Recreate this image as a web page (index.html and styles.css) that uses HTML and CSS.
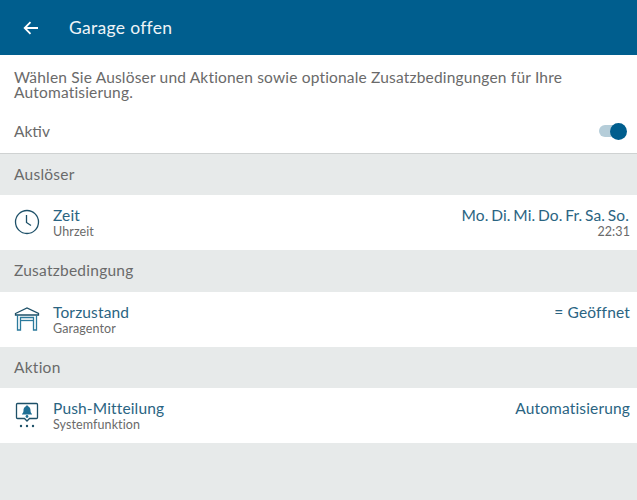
FILE: index.html
```html
<!DOCTYPE html>
<html lang="de">
    <head>
        <meta charset="utf-8">
        <meta name="viewport" content="width=device-width, initial-scale=1.0">
        <title>Garage offen</title>

        <link rel="stylesheet" href="styles.css">
    </head>
    <body>
        <header class="topbar">
            <svg class="back" width="16" height="14" viewBox="0 0 16 14">
                <path d="M15 7H2M7.500 1.200L1.700 7l5.800 5.800" fill="none" stroke="#fff" stroke-width="1.800"/>
            </svg>
            <span class="title">Garage offen</span>
        </header>

        <section class="intro">
            <p class="text">Wählen Sie Auslöser und Aktionen sowie optionale Zusatzbedingungen für Ihre Automatisierung.</p>
            <div class="active">
                <span>Aktiv</span>
                <div class="switch"><div class="knob"></div></div>
            </div>
        </section>

        <h2 class="section">Auslöser</h2>
        <div class="row">
            <svg class="icon" width="26" height="26" viewBox="0 0 26 26">
                <circle cx="13" cy="13" r="11.500" fill="none" stroke="#1d5068" stroke-width="1.300"/>
                <path d="M12.500 6v7.500l4.500 3" fill="none" stroke="#1d5068" stroke-width="1.300"/>
            </svg>
            <div class="labels">
                <div class="name">Zeit</div>
                <div class="sub">Uhrzeit</div>
            </div>
            <div class="values">
                <div class="name days">Mo. Di. Mi. Do. Fr. Sa. So.</div>
                <div class="sub">22:31</div>
            </div>
        </div>

        <h2 class="section">Zusatzbedingung</h2>
        <div class="row">
            <svg class="icon" width="26" height="26" viewBox="0 0 26 26">
                <path d="M1.500 7.500L13 2l11.500 5.500v1.500h-23z" fill="none" stroke="#1d5068" stroke-width="1.300"/>
                <path d="M3.500 9v15h3V11.500h13V24h3V9" fill="none" stroke="#2b7a9c" stroke-width="1.300"/>
                <path d="M6.500 14.500h13" fill="none" stroke="#2b7a9c" stroke-width="1.300"/>
            </svg>
            <div class="labels">
                <div class="name">Torzustand</div>
                <div class="sub">Garagentor</div>
            </div>
            <div class="values">
                <div class="name">= Geöffnet</div>
            </div>
        </div>

        <h2 class="section">Aktion</h2>
        <div class="row">
            <svg class="icon" width="26" height="26" viewBox="0 0 26 26">
                <path d="M3.500 1.500h19a1 1 0 0 1 1 1v13a1 1 0 0 1-1 1h-7l-2.500 2.500-2.500-2.500h-7a1 1 0 0 1-1-1v-13a1 1 0 0 1 1-1z" fill="none" stroke="#1d5068" stroke-width="1.300"/>
                <path d="M13 3.500c1 0 1.500.7 1.500 1.300 1.500.6 2 2 2 3.500 0 2 .5 3 1.500 3.700v.5H8v-.5c1-.7 1.500-1.700 1.500-3.700 0-1.500.5-2.900 2-3.500 0-.6.5-1.300 1.500-1.300z" fill="#1f6f94"/>
                <circle cx="13" cy="14.500" r="1.400" fill="#1f6f94"/>
                <circle cx="7" cy="24" r="1.200" fill="#1d5068"/>
                <circle cx="13" cy="24" r="1.200" fill="#1d5068"/>
                <circle cx="19" cy="24" r="1.200" fill="#1d5068"/>
            </svg>
            <div class="labels">
                <div class="name">Push-Mitteilung</div>
                <div class="sub">Systemfunktion</div>
            </div>
            <div class="values">
                <div class="name">Automatisierung</div>
            </div>
        </div>
    </body>
</html>
```

FILE: styles.css
```css
body {
    margin: 0;
    min-height: 500px;
    background: #e7eaea;
    font-family: Lato, "Open Sans", sans-serif;
    font-weight: 400;
    color: #6a6a6a;
}
.topbar {
    display: flex;
    align-items: center;
    height: 55px;
    padding-left: 23px;
    gap: 30px;
    background: #005e8e;
    color: #eef4f7;
}
.title {
    font-size: 17.500px;
    font-weight: 400;
    letter-spacing: 0.3px;
}
.intro {
    height: 98.500px;
    padding: 15px 8px 0 14px;
    box-sizing: border-box;
    background: #fff;
    border-bottom: 1px solid #cfd2d2;
}
.text {
    margin: 0;
    font-size: 15.500px;
    line-height: 15px;
    letter-spacing: 0.18px;
}
.active {
    display: flex;
    justify-content: space-between;
    align-items: center;
    margin-top: 22px;
    font-size: 15.500px;
}
.switch {
    position: relative;
    width: 27px;
    height: 12px;
    border-radius: 6px;
    background: #b5cdd9;
    margin-right: 3px;
}
.knob {
    position: absolute;
    right: -1px;
    top: -2.500px;
    width: 17px;
    height: 17px;
    border-radius: 50%;
    background: #005e8e;
}
.section {
    margin: 0;
    height: 41.500px;
    padding-left: 14px;
    font-size: 15.500px;
    font-weight: 400;
    line-height: 41.500px;
    letter-spacing: 0.25px;
}
.row {
    display: flex;
    align-items: flex-start;
    height: 55px;
    padding: 12px 7px 0 14px;
    box-sizing: border-box;
    background: #fff;
    color: #2a6482;
}
.icon {
    margin: 2px 13px 0 0;
}
.labels {
    flex: 1;
}
.values {
    text-align: right;
}
.name {
    font-size: 15.500px;
    line-height: 17px;
    letter-spacing: 0.15px;
}
.days {
    word-spacing: -1.500px;
    margin-right: 1px;
}
.sub {
    font-size: 12.500px;
    line-height: 15px;
    letter-spacing: 0.1px;
    color: #6a6a6a;
}
```
